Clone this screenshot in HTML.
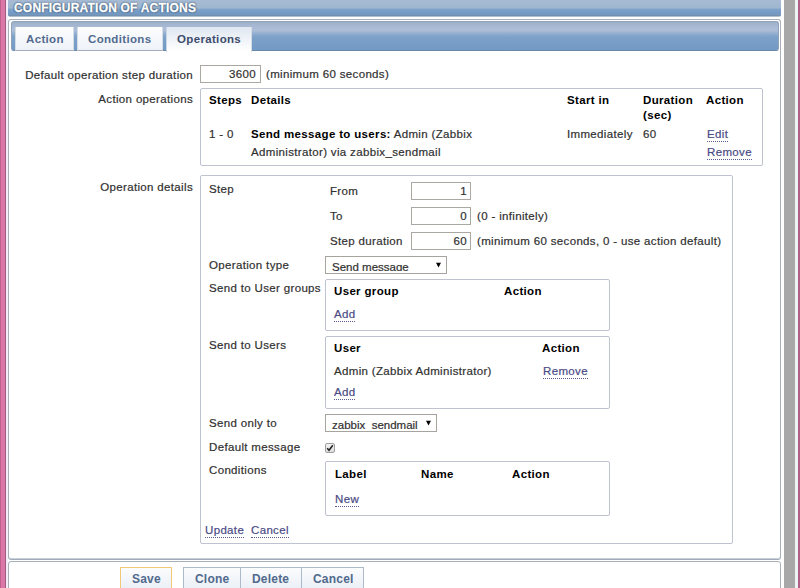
<!DOCTYPE html>
<html><head><meta charset="utf-8">
<style>
html,body{margin:0;padding:0;}
body{width:800px;height:588px;overflow:hidden;position:relative;background:#fff;font-family:"Liberation Sans",sans-serif;font-size:11.5px;letter-spacing:0.34px;color:#303030;-webkit-text-stroke-width:0.2px;}
.a{position:absolute;}
.t{position:absolute;white-space:nowrap;line-height:14px;}
.b,b,.tab span,.btn span{-webkit-text-stroke-width:0;}
.b{font-weight:bold;color:#000;}
.r{text-align:right;}
.lk{color:#4a4a84;border-bottom:1px dotted #5c5c92;line-height:13px;}
.box{position:absolute;border:1px solid #bfc3cf;border-radius:2px;box-sizing:border-box;}
.inp{position:absolute;border:1px solid #aba7a3;box-sizing:border-box;background:#fff;}
.sel{position:absolute;border:1px solid #a7a4a0;box-sizing:border-box;background:#fff;overflow:hidden;}
.tab{position:absolute;top:27px;height:24px;box-sizing:border-box;background:linear-gradient(#fdfdfe,#eef2f8);border:1px solid #d4dce6;border-top:0;border-bottom-color:#a4aebb;}
.tab span{position:absolute;top:5px;font-weight:bold;color:#526b8f;line-height:14px;}
.btn{position:absolute;top:567px;height:26px;box-sizing:border-box;border:1px solid #adbac9;background:linear-gradient(#fbfcfd,#e8eef6);}
.btn span{position:absolute;top:4px;font-size:12px;letter-spacing:0.2px;font-weight:bold;color:#50698d;line-height:14px;}
</style></head><body>
<!-- left pink strip -->
<div class="a" style="left:0;top:0;width:6px;height:588px;background:linear-gradient(90deg,#bf5f90 0,#bf5f90 1px,#dc78a8 1px,#dc78a8 5px,#9a5a80 5px)"></div>
<div class="a" style="left:6px;top:0;width:2px;height:588px;background:#f8eefa"></div>
<!-- right scrollbar strip -->
<div class="a" style="left:784px;top:0;width:11px;height:588px;background:#a8a8a8"></div>
<div class="a" style="left:795px;top:0;width:3px;height:588px;background:#eef4f4"></div>
<div class="a" style="left:798px;top:0;width:2px;height:588px;background:#b06088"></div>

<!-- header -->
<div class="a" style="left:8px;top:-4px;width:773px;height:21px;border-radius:2px;background:linear-gradient(#a9bdd4 0px,#a6bbd3 6px,#9fb6d0 12px,#80a3ca 13.2px,#779dc6 15.5px,#7399c3 18.5px,#7190b0 19px,#7890aa 20px,#b0bfce 20px)"></div>
<div class="t" style="left:14px;top:1px;font-weight:bold;color:#fff;font-size:12px;letter-spacing:0.2px;text-shadow:0 0 2px #34506e,0 0 2px #34506e,0 0 1px #34506e;-webkit-text-stroke:0.3px #fff">CONFIGURATION OF ACTIONS</div>

<!-- main panel -->
<div class="a" style="left:8px;top:19px;width:773px;height:541px;box-sizing:border-box;border:1px solid #a8b0b8;border-bottom-color:#a2aab8;border-radius:3px;box-shadow:inset 0 -1px 0 #c8d0dc;"></div>
<!-- tab bar -->
<div class="a" style="left:11px;top:21px;width:768px;height:30px;box-sizing:border-box;border:1px solid #8ea2ba;border-bottom-color:#6a88a8;border-radius:3px;background:linear-gradient(#9cb0c8 0px,#a2b5ce 2px,#adbdd8 7px,#aabcd7 9px,#8eaccd 12px,#7da1c9 15px,#739ac5 28px)"></div>
<div class="tab" style="left:15px;width:59px;"><span style="left:10px">Action</span></div>
<div class="tab" style="left:77px;width:86px;"><span style="left:10px">Conditions</span></div>
<div class="tab" style="left:166px;width:86px;height:25px;border-left-color:#c8d4e2;border-bottom:0;background:linear-gradient(#dfe7f1,#eef2f8 45%,#fbfcfd 85%,#fff);"><span style="left:10px;color:#3d4c6c">Operations</span></div>

<!-- form labels -->
<div class="t r" style="left:0;width:193px;top:68px">Default operation step duration</div>
<div class="t r" style="left:0;width:193px;top:92px">Action operations</div>
<div class="t r" style="left:0;width:193px;top:180px">Operation details</div>

<div class="inp" style="left:200px;top:65px;width:61px;height:18px"></div>
<div class="t r" style="left:200px;width:56px;top:67px">3600</div>
<div class="t" style="left:266px;top:67px">(minimum 60 seconds)</div>

<!-- action operations box -->
<div class="box" style="left:200px;top:88px;width:563px;height:78px"></div>
<div class="t b" style="left:209px;top:93px">Steps</div>
<div class="t b" style="left:251px;top:93px">Details</div>
<div class="t b" style="left:567px;top:93px">Start in</div>
<div class="t b" style="left:643px;top:93px">Duration</div>
<div class="t b" style="left:643px;top:108px">(sec)</div>
<div class="t b" style="left:706px;top:93px">Action</div>
<div class="t" style="left:209px;top:127px">1 - 0</div>
<div class="t" style="left:251px;top:127px"><b style="color:#000">Send message to users:</b> Admin (Zabbix</div>
<div class="t" style="left:251px;top:145px">Administrator) via zabbix_sendmail</div>
<div class="t" style="left:567px;top:127px">Immediately</div>
<div class="t" style="left:643px;top:127px">60</div>
<div class="t lk" style="left:707px;top:128px">Edit</div>
<div class="t lk" style="left:707px;top:146px">Remove</div>

<!-- operation details box -->
<div class="box" style="left:200px;top:175px;width:533px;height:369px"></div>
<div class="t" style="left:209px;top:182px">Step</div>
<div class="t" style="left:330px;top:184px">From</div>
<div class="t" style="left:330px;top:209px">To</div>
<div class="t" style="left:330px;top:234px">Step duration</div>
<div class="inp" style="left:411px;top:182px;width:60px;height:18px"></div>
<div class="inp" style="left:411px;top:207px;width:60px;height:18px"></div>
<div class="inp" style="left:411px;top:232px;width:60px;height:18px"></div>
<div class="t r" style="left:411px;width:56px;top:184px">1</div>
<div class="t r" style="left:411px;width:56px;top:209px">0</div>
<div class="t r" style="left:411px;width:56px;top:234px">60</div>
<div class="t" style="left:477px;top:209px">(0 - infinitely)</div>
<div class="t" style="left:477px;top:234px">(minimum 60 seconds, 0 - use action default)</div>

<div class="t" style="left:209px;top:258px">Operation type</div>
<div class="sel" style="left:325px;top:256px;width:122px;height:18px"><div class="a" style="left:0;top:0;width:104px;height:14px;overflow:hidden"><div class="t" style="left:6px;top:3px;letter-spacing:0">Send message</div></div><svg class="a" style="left:109px;top:5px" width="7" height="6"><path d="M1 0.8H6L3.5 5.6Z" fill="#000"/></svg></div>

<div class="t" style="left:209px;top:281px">Send to User groups</div>
<div class="box" style="left:325px;top:279px;width:285px;height:52px"></div>
<div class="t b" style="left:334px;top:284px">User group</div>
<div class="t b" style="left:504px;top:284px">Action</div>
<div class="t lk" style="left:334px;top:308px">Add</div>

<div class="t" style="left:209px;top:338px">Send to Users</div>
<div class="box" style="left:325px;top:336px;width:285px;height:73px"></div>
<div class="t b" style="left:334px;top:341px">User</div>
<div class="t b" style="left:542px;top:341px">Action</div>
<div class="t" style="left:334px;top:364px">Admin (Zabbix Administrator)</div>
<div class="t lk" style="left:543px;top:365px">Remove</div>
<div class="t lk" style="left:334px;top:386px">Add</div>

<div class="t" style="left:209px;top:416px">Send only to</div>
<div class="sel" style="left:325px;top:414px;width:112px;height:18px"><div class="a" style="left:0;top:0;width:98px;height:14px;overflow:hidden"><div class="t" style="left:6px;top:3px;letter-spacing:0">zabbix_sendmail</div></div><svg class="a" style="left:99px;top:5px" width="7" height="6"><path d="M1 0.8H6L3.5 5.6Z" fill="#000"/></svg></div>

<div class="t" style="left:209px;top:440px">Default message</div>
<div class="a" style="left:325px;top:443px;width:10px;height:10px;box-sizing:border-box;border:1px solid #a0a0a0;border-radius:2px;background:linear-gradient(#f4f4f4,#dcdcdc)"><svg class="a" style="left:0;top:0" width="8" height="8" viewBox="0 0 8 8"><path d="M1.2 4.2 L3 6.2 L6.8 1.2" fill="none" stroke="#202020" stroke-width="1.5"/></svg></div>
<div class="t" style="left:209px;top:463px">Conditions</div>
<div class="box" style="left:325px;top:461px;width:285px;height:55px"></div>
<div class="t b" style="left:335px;top:467px">Label</div>
<div class="t b" style="left:421px;top:467px">Name</div>
<div class="t b" style="left:512px;top:467px">Action</div>
<div class="t lk" style="left:335px;top:493px">New</div>

<div class="t lk" style="left:205px;top:524px">Update</div>
<div class="t lk" style="left:251px;top:524px">Cancel</div>

<!-- bottom panel -->
<div class="a" style="left:8px;top:561px;width:773px;height:40px;box-sizing:border-box;border:1px solid #a8b0b8;border-radius:3px;"></div>
<div class="btn" style="left:120px;width:52px;border-color:#f0c878"><span style="left:11px">Save</span></div>
<div class="btn" style="left:183px;width:58px;"><span style="left:11px">Clone</span></div>
<div class="btn" style="left:240px;width:62px;"><span style="left:11px">Delete</span></div>
<div class="btn" style="left:301px;width:63px;"><span style="left:11px">Cancel</span></div>
</body></html>
